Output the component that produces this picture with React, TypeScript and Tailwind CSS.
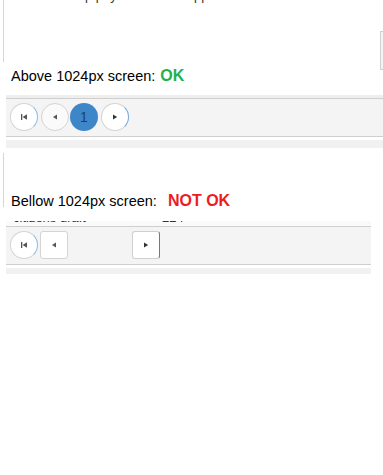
import React from "react";

const First = () => (
  <svg width="8" height="8" viewBox="0 0 8 8">
    <rect x="1" y="1" width="1.3" height="6" fill="#555" />
    <path d="M7 1.2 L2.6 4 L7 6.8 Z" fill="#555" />
  </svg>
);
const Prev = () => (
  <svg width="8" height="8" viewBox="0 0 8 8">
    <path d="M6 1.5 L2 4 L6 6.5 Z" fill="#555" />
  </svg>
);
const Next = () => (
  <svg width="8" height="8" viewBox="0 0 8 8">
    <path d="M2 1.5 L6.2 4 L2 6.5 Z" fill="#333" />
  </svg>
);

export default function App() {
  return (
    <div className="w-[383px] h-[475px] bg-white overflow-hidden font-['Liberation_Sans',Arial,sans-serif] text-black">
      {/* Section A */}
      <div className="flex h-[62px]">
        <div className="ml-[3px] flex-1 border-l border-[#d6d6d6] h-[62px] overflow-hidden">
          <div className="h-[4px] overflow-hidden relative">
            <div className="flex mt-[-12px] text-[13px] leading-[16px] text-[#333]">
              <span className="ml-[52px]">Group pay</span>
              <span className="ml-[60px]">2 7Д</span>
            </div>
          </div>
        </div>
        <div className="w-[3px] mt-[31px] h-[39px] bg-[#f4f4f4] border-t border-b border-l border-[#d0d0d0]" />
      </div>
      <div className="h-[33px] pt-[5px] pl-[11px] flex items-baseline">
        <span className="text-[14.5px] leading-[17px]">Above 1024px screen:</span>
        <span className="ml-[5px] text-[16px] leading-[17px] font-bold text-[#22b14c]">OK</span>
      </div>

      {/* Pagination 1 */}
      <div className="ml-[6px]">
        <div className="h-[3px] bg-[#eeeeee]" />
        <div className="h-[39px] bg-[#f4f4f4] border-t border-b border-[#cfcfcf] pl-[4px] pt-[4px] flex items-start">
          <div className="w-[28px] h-[28px] rounded-full bg-white border border-[#d4d4d4] border-r-[#8cb8e4] flex items-center justify-center">
            <First />
          </div>
          <div className="ml-[3px] w-[28px] h-[28px] rounded-full bg-[#fafafa] border border-[#d4d4d4] flex items-center justify-center">
            <Prev />
          </div>
          <div className="ml-[1px] w-[28px] h-[28px] rounded-full bg-[#3d87c8] flex items-center justify-center text-[14px] text-[#22405e]">
            1
          </div>
          <div className="ml-[3px] w-[28px] h-[28px] rounded-full bg-white border border-[#d4d4d4] border-r-[#6fa6dc] flex items-center justify-center">
            <Next />
          </div>
        </div>
        <div className="h-[3px] bg-white" />
        <div className="h-[8px] bg-[#f1f1f1]" />
      </div>

      {/* Section B */}
      <div className="h-[73px] pt-[5px]">
        <div className="ml-[3px] border-l border-[#d6d6d6] h-[54px] pl-[7px] pt-[39px]">
          <div className="flex items-baseline">
            <span className="text-[14.5px] leading-[17px]">Bellow 1024px screen:</span>
            <span className="ml-[11px] text-[16px] leading-[17px] font-bold text-[#ed1c24]">NOT OK</span>
          </div>
        </div>
      </div>

      {/* Pagination 2 */}
      <div className="ml-[6px] w-[365px]">
        <div className="h-[5px] bg-[#fafafa] overflow-hidden">
          <div className="flex mt-[-11px] text-[13px] leading-[16px] text-[#333]">
            <span className="ml-[7px] w-[149px]">citizens draft</span>
            <span>224</span>
          </div>
        </div>
        <div className="h-[39px] bg-[#f4f4f4] border-t border-b border-[#cfcfcf] pl-[4px] pt-[4px] flex items-start">
          <div className="w-[28px] h-[28px] rounded-full bg-white border border-[#d4d4d4] border-r-[#8cb8e4] flex items-center justify-center">
            <First />
          </div>
          <div className="ml-[2px] w-[28px] h-[28px] rounded-[3px] bg-white border border-[#d4d4d4] flex items-center justify-center">
            <Prev />
          </div>
          <div className="ml-[64px] w-[28px] h-[28px] rounded-[3px] bg-white border border-[#cfcfcf] border-r-[#3d87c8] flex items-center justify-center">
            <Next />
          </div>
        </div>
        <div className="h-[3px] bg-white" />
        <div className="h-[6px] bg-[#f1f1f1]" />
      </div>
    </div>
  );
}
